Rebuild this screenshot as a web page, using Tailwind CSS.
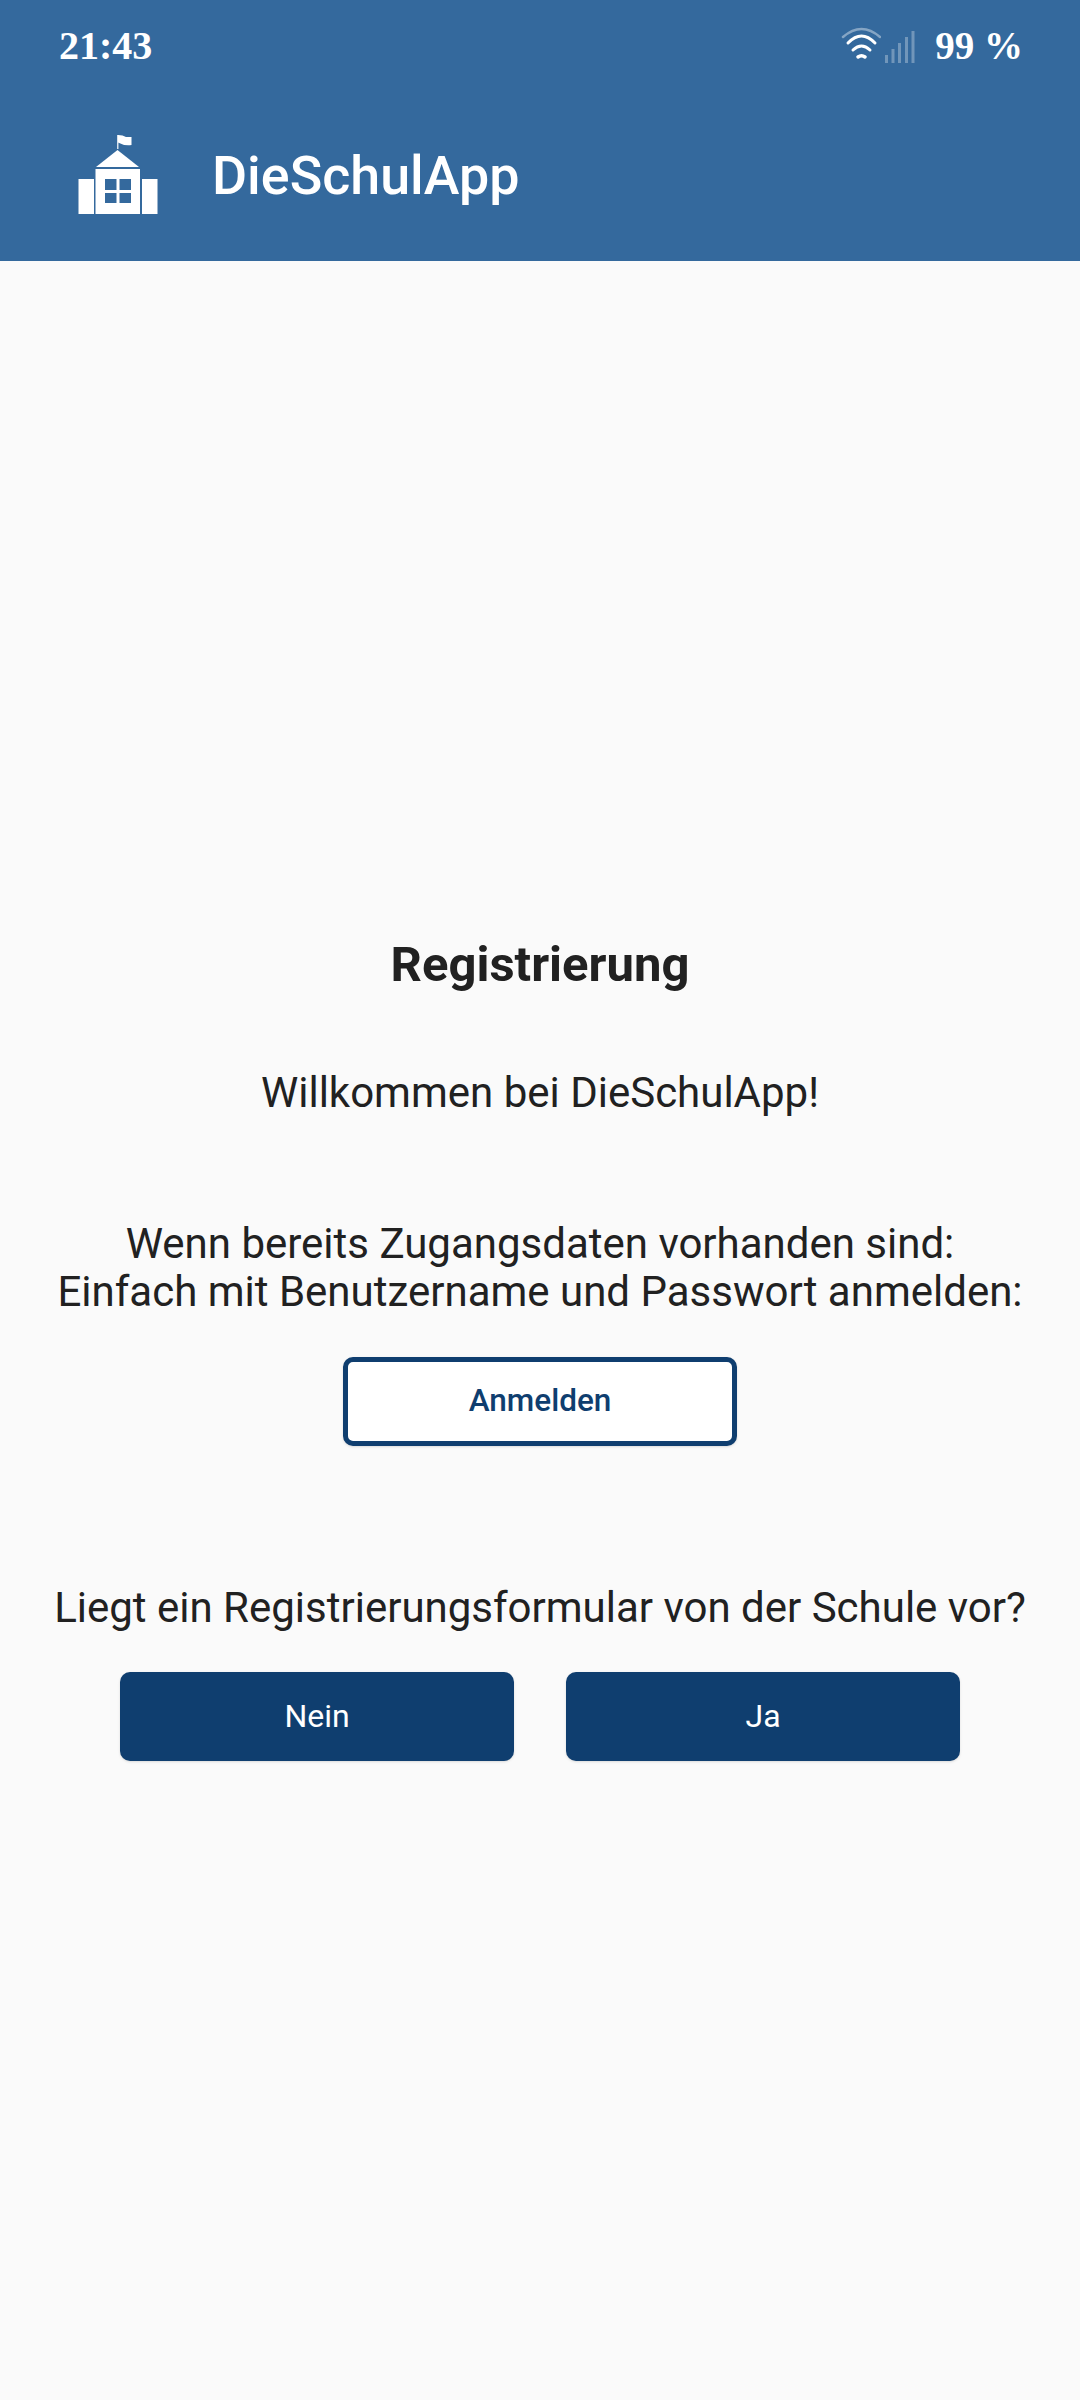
<!DOCTYPE html>
<html lang="de">

<head>
  <meta charset="UTF-8" />
  <meta name="viewport" content="width=device-width, initial-scale=1" />
  <title>DieSchulApp</title>
  <script src="https://cdn.jsdelivr.net/npm/@tailwindcss/browser@4"></script>
</head>

<body class="bg-[#fafafa] font-[Roboto,sans-serif] w-[1080px] h-[2400px] overflow-hidden flex flex-col">
  <header class="bg-[#34699d] h-[261px] shrink-0 text-white">
    <!-- Status bar -->
    <div class="h-[90px] pl-[59px] pr-[57px] pt-[2px] flex items-center justify-between">
      <span class="font-['Liberation_Serif',serif] font-bold text-[40px]">21:43</span>
      <div class="flex items-center">
        <svg class="w-[40px] h-[36px] mr-[4px] mt-[-4px]" viewBox="0 0 40 36" fill="none" stroke="white" stroke-linecap="round">
          <path d="M2 11 Q20.500 -5 39 11" stroke-width="2.500" opacity="0.4" />
          <path d="M7 17 Q20.500 3 34 17" stroke-width="3" />
          <path d="M12 24 Q20.500 16 29 24" stroke-width="3" />
          <path d="M17 31 Q20.500 28.500 24 31" stroke-width="3.500" />
        </svg>
        <svg class="w-[30px] h-[32px] mr-[20px] mt-[1px]" viewBox="0 0 30 32" fill="white" opacity="0.3">
          <rect x="0" y="24" width="3" height="8" />
          <rect x="6.500" y="18" width="3" height="14" />
          <rect x="13" y="12" width="3" height="20" />
          <rect x="20" y="6" width="3" height="26" />
          <rect x="26.500" y="0" width="3" height="32" />
        </svg>
        <span class="font-['Liberation_Serif',serif] font-bold text-[39px]">99 %</span>
      </div>
    </div>
    <!-- App bar -->
    <div class="h-[169px] flex items-center pl-[78px]">
      <svg class="w-[80px] h-[80px] mr-[54px]" viewBox="0 0 80 80" fill="white">
        <rect x="39" y="0" width="1.500" height="14" opacity="0.8" />
        <path d="M40 0 Q45 0 48 2 L53.500 2 L53.500 10 Q46 11 40 7.500Z" />
        <path d="M39.500 15 L61 32 L18 32Z" />
        <rect x="0.500" y="44" width="15.500" height="35" />
        <rect x="64" y="44" width="15.500" height="35" />
        <path fill-rule="evenodd" d="M17.500 34 H62 V79 H17.500Z M27 44 V68 H53 V44Z" />
        <rect x="38.500" y="44" width="3" height="24" />
        <rect x="27" y="55" width="26" height="3" />
      </svg>
      <h1 class="text-[53.800px] font-medium mt-[4px]">DieSchulApp</h1>
    </div>
  </header>

  <main class="flex-1 flex flex-col items-center pt-[679px] text-[#212121]">
    <h2 class="text-[49px] font-bold leading-[50px]">Registrierung</h2>
    <p class="text-[42px] leading-[50px] mt-[78px]">Willkommen bei DieSchulApp!</p>
    <p class="text-[42px] leading-[48px] mt-[102px] text-center">
      Wenn bereits Zugangsdaten vorhanden sind:<br>
      Einfach mit Benutzername und Passwort anmelden:
    </p>
    <button class="mt-[41px] w-[394px] h-[89px] pb-[2px] bg-white border-[5px] border-[#0f3e6f] rounded-[10px] shadow text-[#0f3e6f] text-[31.500px] font-medium">Anmelden</button>
    <p class="text-[42px] leading-[50px] mt-[137px]">Liegt ein Registrierungsformular von der Schule vor?</p>
    <div class="mt-[39px] flex gap-[52px]">
      <button class="w-[394px] h-[89px] pb-[2px] bg-[#0f3e6f] rounded-[10px] shadow text-white text-[32px]">Nein</button>
      <button class="w-[394px] h-[89px] pb-[2px] bg-[#0f3e6f] rounded-[10px] shadow text-white text-[32px]">Ja</button>
    </div>
  </main>
</body>

</html>
